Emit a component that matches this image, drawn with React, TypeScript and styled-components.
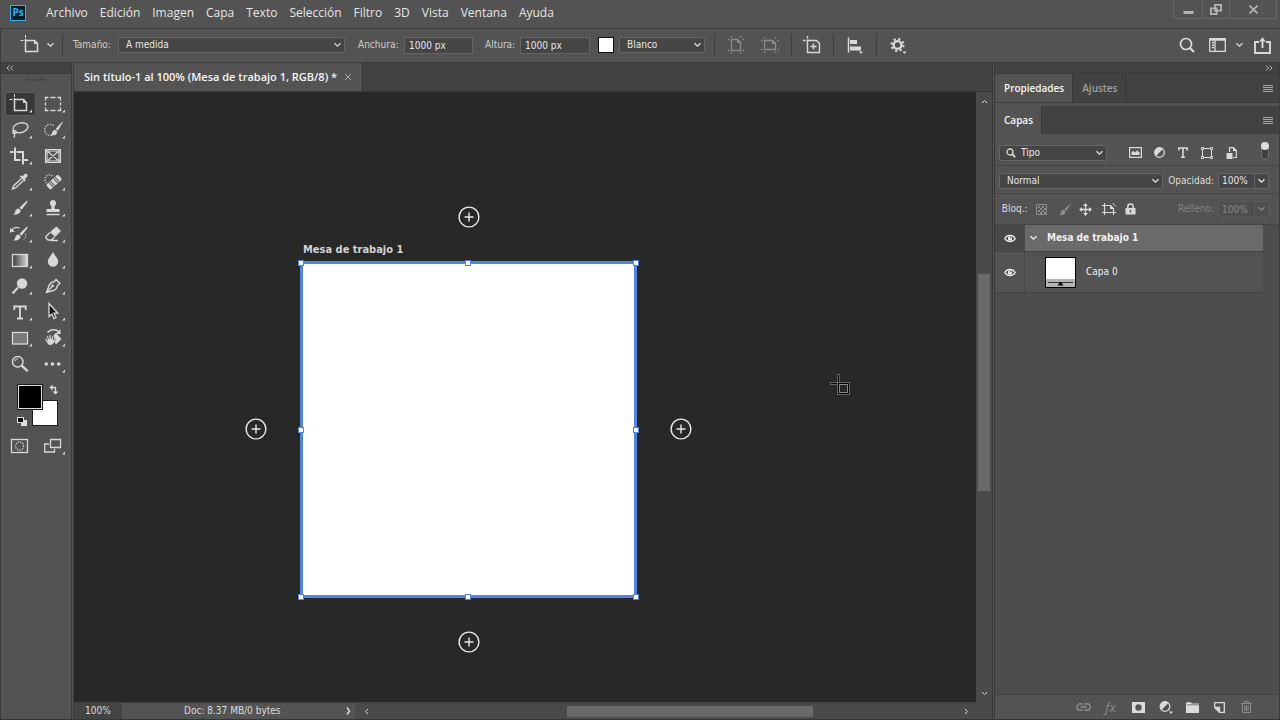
import React from "react";
import styled, { createGlobalStyle, css } from "styled-components";

const ui = `"DejaVu Sans Condensed", "DejaVu Sans", sans-serif`;
const sys = `"Open Sans", "Noto Sans", sans-serif`;

const GlobalStyle = createGlobalStyle`
  *, *::before, *::after { box-sizing: border-box; }
  body { margin: 0; background: #535353; color: #dcdcdc; font-family: ${ui}; font-size: 10px; line-height: 16px; }
  button, input, select { font: inherit; color: inherit; margin: 0; padding: 0; }
  button { background: none; border: 0; display: inline-flex; align-items: center; justify-content: center; }
  svg { display: block; flex: none; }
`;

const Shell = styled.div`
  display: flex;
  flex-direction: column;
  height: 100vh;
  border-bottom: 1px solid #263c38;
`;

/* ---------- menu bar ---------- */
const MenuBar = styled.header`
  display: flex;
  align-items: flex-start;
  justify-content: space-between;
  height: 29px;
  flex: none;
  padding-left: 10px;
  border-bottom: 1px solid #3c3c3c;
`;
const Menus = styled.nav`
  display: flex;
  align-items: center;
  height: 26px;
  gap: 12px;
  font-family: ${sys};
  font-size: 12px;
  color: #e6e6e6;
`;
const Logo = styled.span`
  width: 16px;
  height: 16px;
  margin-right: 8px;
  border: 1px solid #26b4e8;
  background: #061e30;
  color: #2cb6ea;
  font-family: ${sys};
  font-size: 10px;
  font-weight: 700;
  line-height: 13px;
  text-align: center;
`;
const WindowButtons = styled.div`
  display: flex;
  height: 19px;
  margin-right: 3px;
  border: 1px solid #686868;
  border-top: 0;
  border-radius: 0 0 3px 3px;
  color: #b4b4b4;
`;
const WindowButton = styled.button<{ $w: number }>`
  width: ${(p) => p.$w}px;
  & + & { border-left: 1px solid #686868; }
`;

/* ---------- options bar ---------- */
const OptionsBar = styled.div`
  display: flex;
  align-items: center;
  height: 34px;
  flex: none;
  padding: 0 1px 1px 5px;
  border-bottom: 1px solid #3c3c3c;
  border-left: 1px solid #3c3c3c;
`;
const Divider = styled.i<{ $l: number; $r: number }>`
  width: 1px;
  height: 22px;
  margin: 0 ${(p) => p.$r}px 0 ${(p) => p.$l}px;
  background: #3e3e3e;
`;
const Spacer = styled.span`flex: 1;`;
const FieldGroup = styled.label<{ $label: number; $after: number }>`
  display: flex;
  align-items: center;
  margin-right: ${(p) => p.$after}px;
  color: #cecece;
  > span:first-child { width: ${(p) => p.$label}px; white-space: nowrap; }
`;
const fieldBox = css`
  height: 16px;
  background: #454545;
  border: 1px solid #656565;
  border-radius: 2px;
  color: #e6e6e6;
  font-size: 10px;
  line-height: 14px;
  outline: 0;
`;
const TextInput = styled.input<{ $w: number }>`
  ${fieldBox}
  width: ${(p) => p.$w}px;
  height: 17px;
  border-radius: 0;
  padding: 0 0 0 4px;
`;
const SelectWrap = styled.span<{ $w?: number }>`
  display: inline-flex;
  align-items: center;
  position: relative;
  ${(p) => (p.$w ? `width: ${p.$w}px;` : "flex: 1;")}
  > svg { position: absolute; right: 3px; pointer-events: none; }
`;
const SelectBox = styled.select<{ $pad: number }>`
  ${fieldBox}
  appearance: none;
  width: 100%;
  padding: 0 16px 0 ${(p) => p.$pad}px;
`;
const SearchMark = styled.span`
  position: absolute;
  left: 7px;
  pointer-events: none;
`;
const Swatch = styled.button`
  width: 16px;
  height: 16px;
  background: #fff;
  border: 1px solid #111;
  margin-right: 5px;
`;
const IconButton = styled.button<{ $w?: number; $h?: number; $dim?: boolean }>`
  width: ${(p) => p.$w ?? 24}px;
  height: ${(p) => p.$h ?? 24}px;
  flex: none;
  color: ${(p) => (p.$dim ? "#8c8c8c" : "#dadada")};
`;

/* ---------- workspace ---------- */
const Workspace = styled.div`
  display: flex;
  flex: 1;
  min-height: 0;
  border-left: 1px solid #3c3c3c;
`;
const ToolPanel = styled.aside`
  width: 71px;
  flex: none;
  border-right: 1px solid #3c3c3c;
`;
const CollapseBar = styled.div<{ $end?: boolean }>`
  display: flex;
  flex: none;
  justify-content: ${(p) => (p.$end ? "flex-end" : "flex-start")};
  align-items: center;
  height: 11px;
  padding: 0 6px 0 5px;
  background: #424242;
  border-bottom: 1px solid #3a3a3a;
  color: #b6b6b6;
`;
const Grip = styled.div`
  height: 3px;
  width: 19px;
  margin: 4px auto 10px 25px;
  background: repeating-linear-gradient(90deg, #3f3f3f 0 1px, #575757 1px 2px);
`;
const ToolGrid = styled.div`
  display: grid;
  grid-template-columns: 33px 33px;
  grid-auto-rows: 26px;
  padding-left: 3px;
`;
const ToolButton = styled.button<{ $active?: boolean }>`
  place-self: center;
  width: 31px;
  height: 24px;
  padding-right: 1px;
  border-radius: 2px;
  color: #d8d8d8;
  ${(p) => p.$active && "background: #383838; box-shadow: 0 0 0 1px #5e5e5e inset;"}
`;
const ColorArea = styled.div`
  padding: 6px 0 0 15px;
  margin-bottom: 4px;
`;

const DocColumn = styled.main`
  display: flex;
  flex-direction: column;
  flex: 1;
  min-width: 0;
  margin-left: 1px;
  border-left: 1px solid #3c3c3c;
  border-right: 1px solid #383838;
`;
const DocTabs = styled.div`
  display: flex;
  flex: none;
  height: 29px;
  background: #424242;
  border-bottom: 1px solid #3a3a3a;
`;
const DocTab = styled.div`
  display: flex;
  align-items: center;
  gap: 7px;
  padding: 0 10px;
  background: #535353;
  border-right: 1px solid #383838;
  font-family: ${sys};
  font-size: 11px;
  font-weight: 600;
  color: #f6f6f6;
  white-space: nowrap;
`;
const CloseTab = styled.button`color: #a8a8a8;`;
const CanvasRow = styled.div`
  display: flex;
  flex: 1;
  min-height: 0;
`;
const Canvas = styled.div`
  position: relative;
  flex: 1;
  min-width: 0;
  overflow: hidden;
  background: #282828;
`;
const Pin = styled.div<{ $x: number; $y: number }>`
  position: absolute;
  left: ${(p) => p.$x}px;
  top: ${(p) => p.$y}px;
`;
const AddBoard = styled(Pin).attrs({ as: "button" })`
  width: 22px;
  height: 22px;
  color: #e8e8e8;
`;
const BoardName = styled(Pin)`
  font-size: 11px;
  font-weight: 700;
  color: #d2d2d2;
  white-space: nowrap;
`;
const Artboard = styled(Pin)`
  width: 337px;
  height: 337px;
  background: #fff;
  border: 3px solid #5585e0;
`;
const Handle = styled(Pin)`
  width: 6px;
  height: 6px;
  background: #fff;
  border: 1px solid #5585e0;
`;

const VScroll = styled.div`
  display: flex;
  flex-direction: column;
  align-items: center;
  width: 16px;
  flex: none;
  background: #4a4a4a;
  color: #b4b4b4;
`;
const VTrack = styled.div`
  flex: 1;
  display: flex;
  flex-direction: column;
  align-items: center;
  padding-top: 164px;
`;
const VThumb = styled.div`
  width: 12px;
  height: 217px;
  background: #6a6a6a;
`;
const StatusBar = styled.footer`
  display: flex;
  flex: none;
  align-items: center;
  height: 17px;
  background: #4a4a4a;
  border-top: 1px solid #404040;
  color: #dcdcdc;
`;
const Zoom = styled.input`
  width: 48px;
  height: 16px;
  border: 0;
  background: #444;
  padding: 0 0 0 11px;
  outline: 0;
`;
const DocInfo = styled.div`
  display: flex;
  align-items: center;
  justify-content: space-between;
  width: 233px;
  height: 16px;
  padding: 0 4px 0 62px;
  background: #535353;
`;
const HTrack = styled.div`
  flex: 1;
  display: flex;
  justify-content: center;
  padding-left: 63px;
`;
const HThumb = styled.div`
  width: 246px;
  height: 11px;
  background: #6a6a6a;
`;

/* ---------- right panels ---------- */
const Panels = styled.aside`
  display: flex;
  flex-direction: column;
  width: 286px;
  flex: none;
  margin-left: 1px;
  border-left: 1px solid #383838;
  border-right: 1px solid #3c3c3c;
`;
const PanelTabs = styled.div<{ $gap?: boolean }>`
  display: flex;
  flex: none;
  align-items: stretch;
  height: 28px;
  margin-bottom: ${(p) => (p.$gap ? 4 : 0)}px;
  background: #424242;
  font-family: ${sys};
  ${(p) => p.$gap && "box-shadow: 0 1px 0 #3a3a3a;"}
`;
const PanelTab = styled.button<{ $on?: boolean }>`
  padding: 0 8px 0 9px;
  border-right: 1px solid #383838;
  background: ${(p) => (p.$on ? "#535353" : "transparent")};
  color: ${(p) => (p.$on ? "#f6f6f6" : "#a0a0a0")};
  font-weight: 600;
`;
const PanelMenu = styled.button`
  margin-left: auto;
  padding-right: 6px;
  color: #a4a4a4;
`;
const Row = styled.div<{ $h: number; $top?: number }>`
  display: flex;
  flex: none;
  align-items: center;
  height: ${(p) => p.$h}px;
  padding: ${(p) => p.$top ?? 0}px 10px 0 4px;
  border-bottom: 1px solid #464646;
`;
const FilterIcons = styled.div`
  display: flex;
  margin-left: 16px;
`;
const ToggleSlot = styled.span`margin-left: auto;`;
const Percent = styled.label<{ $off?: boolean }>`
  display: flex;
  align-items: center;
  margin-left: auto;
  opacity: ${(p) => (p.$off ? 0.35 : 1)};
`;
const PercentInput = styled.input`
  ${fieldBox}
  width: 37px;
  margin-left: 4px;
  padding-left: 3px;
  border-radius: 2px 0 0 2px;
`;
const PercentDrop = styled.button`
  ${fieldBox}
  width: 15px;
  margin-left: -1px;
  border-radius: 0 2px 2px 0;
`;
const Layers = styled.ul`
  flex: 1;
  margin: 0;
  padding: 0 16px 0 0;
  background: #4d4d4d;
  list-style: none;
`;
const Layer = styled.li<{ $h: number; $on?: boolean }>`
  display: flex;
  height: ${(p) => p.$h}px;
  border-bottom: 1px solid #444;
  background: ${(p) => (p.$on ? "#6a6a6a" : "#535353")};
  font-weight: ${(p) => (p.$on ? 700 : 400)};
  color: #efefef;
`;
const Eye = styled.button<{ $on?: boolean }>`
  width: 30px;
  border-right: 1px solid #484848;
  background: ${(p) => (p.$on ? "#484848" : "#535353")};
`;
const LayerBody = styled.div<{ $pad: number; $gap: number }>`
  display: flex;
  align-items: center;
  gap: ${(p) => p.$gap}px;
  padding-left: ${(p) => p.$pad}px;
`;
const PanelFooter = styled.div`
  display: flex;
  flex: none;
  justify-content: flex-end;
  align-items: center;
  height: 25px;
  padding-right: 19px;
  border-top: 1px solid #444;
`;
const FxText = styled.em`
  font-family: ${sys};
  font-size: 13px;
`;

/* ---------- drawings ---------- */
type IcoProps = { w: number; h: number; sw?: number; children: React.ReactNode };
const Ico = ({ w, h, sw = 1, children }: IcoProps) => (
  <svg width={w} height={h} viewBox={`0 0 ${w} ${h}`} fill="none" stroke="currentColor" strokeWidth={sw} aria-hidden="true">
    {children}
  </svg>
);
const F = { fill: "currentColor", stroke: "none" };
const ChevronDown = () => (
  <Ico w={9} h={6} sw={1.3}><path d="M1.5 1.2l3 3 3-3" /></Ico>
);
const BurgerIcon = () => (
  <Ico w={10} h={9}><path d="M0 1.500h10M0 3.500h10M0 5.500h10M0 7.500h10" /></Ico>
);
const EyeIcon = () => (
  <Ico w={12} h={9} sw={1.3}>
    <path d="M.7 4.5C3.2.3 8.8.3 11.3 4.5 8.8 8.7 3.2 8.7.7 4.5z" />
    <circle cx="6" cy="4.5" r="2.2" {...F} />
    <circle cx="6.6" cy="3.8" r=".7" fill="#505050" stroke="none" />
  </Ico>
);
const Brush = () => (
  <>
    <path d="M22 4.5l-7.6 7.2 2.2 2.1L22.7 5.7z" {...F} />
    <path d="M13.6 12.4c-2.1-.1-3 1.3-3.300 3-.2 1.300-1 2.300-2.300 3.100 3.500.5 7-.6 7.800-3.800z" {...F} />
  </>
);
const ArtboardShape = () => (
  <>
    <path d="M9.5 2v3M4.500 7.500h3" />
    <path d="M9.5 6v12.500h12v-8l-3-3H9" strokeWidth="1.5" />
    <path d="M18 7l4 4h-4z" {...F} />
  </>
);

const tools: { name: string; active?: boolean; plain?: boolean; art: React.ReactNode }[] = [
  { name: "Mesa de trabajo", active: true, art: <ArtboardShape /> },
  { name: "Marco rectangular", art: <path d="M7.5 8.500v-3h3M12.500 5.500h5M19.500 5.500h3v3M22.500 10.500v3M22.500 15.500v3h-3M17.500 18.500h-5M10.500 18.500h-3v-3M7.500 13.500v-3" strokeWidth="1.3" /> },
  { name: "Lazo", art: (
    <>
      <ellipse cx="15.5" cy="9.8" rx="7.6" ry="4.8" transform="rotate(-14 15.5 9.8)" strokeWidth="1.4" />
      <path d="M8.5 12.500c-1.500 1-.8 3.200 1 3.200s2.800-1.500 1.500-2.600-2.800.1-1.800 2.400c.7 1.500.6 2.800-.4 4" strokeWidth="1.2" />
    </>
  ) },
  { name: "Selección rápida", art: (
    <>
      <path d="M15.5 7.500A5.500 5.500 0 1 0 14 17" strokeDasharray="1.3 1.3" strokeWidth="1.3" />
      <path d="M24.500 3.500l-7 7.500 2.300 1.800 5-8.500z" {...F} />
      <path d="M16.800 11.700c-2.200.4-2.500 2.700-3.800 5.800 3.500.3 6-.9 6.300-3.800z" {...F} />
    </>
  ) },
  { name: "Recortar", art: <><path d="M10 3.500V16h5.500M17.500 16H23" strokeWidth="2" /><path d="M5 8h3.500M11.500 8H18v12.500" strokeWidth="2" /></> },
  { name: "Marco", plain: true, art: <path d="M7.500 5.500h15v13h-15zM9 7h12v10H9zM8 6l14 12M22 6L8 18" strokeWidth="1.1" /> },
  { name: "Cuentagotas", art: (
    <>
      <path d="M16.500 8.500l-8 7.500-1 3 3-1 8-7.500" strokeWidth="1.4" />
      <path d="M14.800 6.200l1.200-1 1.300 1.200 2-2.100c2-1.700 4.300.6 2.700 2.600l-2.100 2.100 1 1.200-1.300 1.300z" {...F} />
    </>
  ) },
  { name: "Pincel corrector", art: (
    <>
      <path d="M14.500 6A4.600 4.600 0 1 0 8.500 13" strokeDasharray="1.3 1.3" strokeWidth="1.3" />
      <g transform="rotate(-42 16 12)">
        <rect x="8" y="8.800" width="16" height="6.600" rx="1.5" {...F} />
        <path d="M12 8.800v6.600M14 8.800v6.600M18 8.800v6.600M20 8.800v6.600" stroke="#535353" />
      </g>
    </>
  ) },
  { name: "Pincel", art: <Brush /> },
  { name: "Tampón", art: (
    <>
      <path d="M15 4a3.200 3.200 0 0 1 2 5.700c-.6.6-.5 2.300-.1 3.300h4.600v3h-13v-3h4.600c.4-1 .5-2.700-.1-3.300A3.200 3.200 0 0 1 15 4z" {...F} />
      <path d="M8.500 18.500h13" strokeWidth="1.5" />
    </>
  ) },
  { name: "Pincel de historia", art: (
    <>
      <Brush />
      <path d="M6.500 8.500c1.500-3 5-3.800 8-2.300" strokeWidth="1.3" /><path d="M5 6l5 3.500-5 1z" {...F} />
      <path d="M20.500 12c.8 2.500-.5 5-3 6" strokeDasharray="1.2 1.2" />
    </>
  ) },
  { name: "Borrador", art: (
    <>
      <path d="M18.500 5l4 4-5.500 5.500-4.500-4.500z" fill="currentColor" strokeLinejoin="round" />
      <path d="M12 10.500l-4 4c-.5.5-.5 1 0 1.500l2 2h3.500l3-3M13 18.500h7" strokeWidth="1.3" />
    </>
  ) },
  { name: "Degradado", art: (
    <>
      <defs><linearGradient id="tool-gradient"><stop offset="0" stopColor="#3a3a3a" /><stop offset="1" stopColor="#dadada" /></linearGradient></defs>
      <rect x="7.500" y="6.500" width="15" height="12" fill="url(#tool-gradient)" strokeWidth="1.3" />
    </>
  ) },
  { name: "Desenfocar", art: <path d="M15 4c1.500 3.500 5.200 6.200 5.200 9.500a5.200 5.200 0 0 1-10.400 0C9.800 10.200 13.500 7.500 15 4z" {...F} /> },
  { name: "Sobreexponer", art: <><circle cx="17" cy="9.5" r="5.2" {...F} /><path d="M13 13.500l-5.500 6" strokeWidth="2" /></> },
  { name: "Pluma", art: (
    <>
      <path d="M18 5.500l4 4-2.500 1.800c-.5 3.500-2.500 5.200-6 5.700l-5 1.500 1.800-5c.8-3.500 2.500-5.500 5.900-5.800z" strokeWidth="1.4" />
      <path d="M8.500 18.500l5-5.500" strokeWidth="1.2" /><circle cx="14.500" cy="12" r="1.4" {...F} />
    </>
  ) },
  { name: "Texto", art: <path d="M9.300 10V6.500h11.400V10M15 7v11M12 18.500h6" strokeWidth="1.8" /> },
  { name: "Selección de trazado", art: <path d="M11 3.500v13l3-2.500 2 4.500 2-1-2-4.300h3.800z" fill="#111" strokeWidth="1.3" /> },
  { name: "Rectángulo", art: <rect x="7.500" y="6.500" width="15" height="11.500" fill="#7a7a7a" strokeWidth="1.3" /> },
  { name: "Rotar vista", art: (
    <>
      <path d="M9.500 6.500c3-3.500 8.500-3.500 11.300-.8" strokeWidth="1.4" /><path d="M22.500 3v5h-4.800z" {...F} />
      <path d="M16 8.500l2-1.500 5.500 6-5.500 5.500-2-3z" {...F} />
      <path d="M10 18.500l-3-5c-.3-1 .8-1.300 1.500-.4l1.200 1.400-1-4.200c-.1-1 1.100-1.200 1.500-.2l1.100 3-.2-4c.1-.9 1.400-.9 1.600 0l.6 3.900.8-3.200c.3-.8 1.400-.6 1.400.3l-.3 4 1-1.400c.6-.7 1.600 0 1.200.8-1.200 2.400-1.500 5-3.900 5.600-1.300.3-2.500.2-3.500-.6z" fill="currentColor" stroke="#535353" strokeWidth=".5" />
    </>
  ) },
  { name: "Zoom", plain: true, art: <><circle cx="12.700" cy="9.700" r="5.3" strokeWidth="1.5" /><path d="M16.700 13.700l6 5.500" strokeWidth="2.4" /><path d="M9.800 9.500a3 3 0 0 1 3-2.800" /></> },
  { name: "Más herramientas", art: <><circle cx="8.300" cy="12" r="1.8" {...F} /><circle cx="14.500" cy="12" r="1.8" {...F} /><circle cx="20.700" cy="12" r="1.8" {...F} /></> },
];

const menus = ["Archivo", "Edición", "Imagen", "Capa", "Texto", "Selección", "Filtro", "3D", "Vista", "Ventana", "Ayuda"];
const addPoints = [[384, 114], [171, 326], [596, 326], [384, 539]];
const handles = [[224, 168], [391, 168], [559, 168], [224, 335], [559, 335], [224, 502], [391, 502], [559, 502]];

type SelProps = { label?: string; value: string; w?: number; pad: number; search?: boolean };
const Dropdown = ({ label, value, w, pad, search }: SelProps) => (
  <SelectWrap $w={w}>
    <SelectBox $pad={pad} aria-label={label}><option>{value}</option></SelectBox>
    {search && <SearchMark><Ico w={10} h={10} sw={1.3}><circle cx="4" cy="4" r="3" /><path d="M6.200 6.200l3 3" strokeWidth="1.8" /></Ico></SearchMark>}
    <ChevronDown />
  </SelectWrap>
);

const OrientationIcon = ({ wide }: { wide?: boolean }) => (
  <Ico w={18} h={18}>
    {wide ? (
      <>
        <path d="M3.500 4.500h8l3 3v6h-11z" strokeWidth="1.3" /><path d="M11 4l4 4h-4z" {...F} />
        <path d="M3.500 1v1.500M14.500 1v1.500M3.500 15.500V17M14.500 15.500V17M0 4.500h1.500M16.500 4.500H18M0 13.500h1.500M16.500 13.500H18" strokeWidth="1.3" />
      </>
    ) : (
      <>
        <path d="M4.500 3.500h6l3 3v8h-9z" strokeWidth="1.3" /><path d="M10 3l4 4h-4z" {...F} />
        <path d="M4.500 0v1.500M13.500 0v1.500M4.500 16.500V18M13.500 16.500V18M1 3.500h1.500M15.500 3.500H17M1 14.500h1.500M15.500 14.500H17" strokeWidth="1.3" />
      </>
    )}
  </Ico>
);

export default function App() {
  return (
    <Shell>
      <GlobalStyle />
      <MenuBar>
        <Menus>
          <Logo>Ps</Logo>
          {menus.map((m) => <button key={m}>{m}</button>)}
        </Menus>
        <WindowButtons>
          <WindowButton $w={28} aria-label="Minimizar"><Ico w={11} h={11}><path d="M.5 8.500h10" strokeWidth="3" /></Ico></WindowButton>
          <WindowButton $w={27} aria-label="Restaurar"><Ico w={12} h={11} sw={1.8}><path d="M4.900.9h6.200v5.700H4.900z" /><path d="M.9 4.400h5.700v5.700H.9z" /></Ico></WindowButton>
          <WindowButton $w={47} aria-label="Cerrar"><Ico w={9} h={9} sw={1.6}><path d="M.5.5l8 8M8.500.5l-8 8" /></Ico></WindowButton>
        </WindowButtons>
      </MenuBar>

      <OptionsBar>
        <IconButton $w={36} aria-label="Herramienta Mesa de trabajo">
          <Ico w={36} h={24}><g transform="translate(10 0)"><ArtboardShape /></g></Ico>
        </IconButton>
        <IconButton $w={17} aria-label="Ajustes preestablecidos"><ChevronDown /></IconButton>
        <Divider $l={3} $r={10} />
        <FieldGroup $label={45} $after={13}><span>Tamaño:</span><Dropdown value="A medida" w={227} pad={7} /></FieldGroup>
        <FieldGroup $label={46} $after={12}><span>Anchura:</span><TextInput $w={69} defaultValue="1000 px" /></FieldGroup>
        <FieldGroup $label={35} $after={8}><span>Altura:</span><TextInput $w={70} defaultValue="1000 px" /></FieldGroup>
        <Swatch aria-label="Color de fondo" />
        <Dropdown label="Fondo" value="Blanco" w={86} pad={7} />
        <Divider $l={9} $r={9} />
        <IconButton $dim aria-label="Vertical"><OrientationIcon /></IconButton>
        <IconButton $w={43} $dim aria-label="Horizontal"><OrientationIcon wide /></IconButton>
        <Divider $l={0} $r={8} />
        <IconButton aria-label="Añadir mesa de trabajo">
          <Ico w={18} h={18} sw={1.4}>
            <path d="M4.500 0v2.500M0 4.500h2.500" /><path d="M4.500 3.500v13h12V7.500l-3-3h-10M10.500 7.500v6M7.500 10.500h6" />
          </Ico>
        </IconButton>
        <Divider $l={9} $r={9} />
        <IconButton aria-label="Alinear">
          <Ico w={18} h={18}><path d="M2.500 1.500v15" strokeWidth="1.5" /><path d="M4 4h7v4H4zM4 10.500h11v4H4zM13 15.500h4l-2 2.500z" {...F} /></Ico>
        </IconButton>
        <Divider $l={9} $r={9} />
        <IconButton aria-label="Opciones">
          <Ico w={18} h={18}>
            <circle cx="8.500" cy="9" r="3.9" strokeWidth="2.4" />
            <circle cx="8.500" cy="9" r="6" strokeWidth="2" strokeDasharray="2.2 2.512" />
            <path d="M13.500 15.500h4l-2 2.500z" {...F} />
          </Ico>
        </IconButton>
        <Spacer />
        <IconButton $w={28} aria-label="Buscar"><Ico w={16} h={16} sw={1.7}><circle cx="7" cy="7" r="5.5" /><path d="M11 11l4 4" strokeWidth="2.2" /></Ico></IconButton>
        <IconButton $w={32} aria-label="Espacio de trabajo"><Ico w={17} h={14} sw={1.3}><path d="M.7.7h15.600v12.600H.7zM1 2h15M6 2.500V13" /><path d="M3 4.500h2M3 7h2M3 9.500h2" strokeWidth="1.5" /></Ico></IconButton>
        <IconButton $w={12} aria-label="Cambiar espacio de trabajo"><ChevronDown /></IconButton>
        <IconButton $w={34} aria-label="Compartir"><Ico w={17} h={17} sw={1.9}><path d="M5 5H1v11h15V5h-4M8.500 11V3" /><path d="M5.200 4.500L8.500.3l3.300 4.200z" {...F} /></Ico></IconButton>
      </OptionsBar>

      <Workspace>
        <ToolPanel>
          <CollapseBar><Ico w={8} h={6}><path d="M3.500.5L1 3l2.500 2.500M7 .5L4.500 3 7 5.500" /></Ico></CollapseBar>
          <Grip />
          <ToolGrid>
            {tools.map((t) => (
              <ToolButton key={t.name} $active={t.active} aria-label={t.name}>
                <Ico w={30} h={24}>
                  {t.art}
                  {!t.plain && <path d="M27 17.500v3h-3z" {...F} />}
                </Ico>
              </ToolButton>
            ))}
          </ToolGrid>
          <ColorArea>
            <Ico w={44} h={46}>
              <rect x="16.500" y="17.500" width="25" height="25" fill="#fff" stroke="#1c1c1c" />
              <rect x="1.500" y="1.500" width="25" height="25" fill="#000" stroke="#1c1c1c" />
              <rect x="2.500" y="2.500" width="23" height="23" fill="#000" stroke="#dcdcdc" />
              <path d="M35.500 4.500h4V9" strokeWidth="1.3" /><path d="M36.500 1.500v6l-3-3zM36.500 8.500h6L39.500 11.500z" {...F} />
              <rect x="5.500" y="37.500" width="5" height="5" fill="#ddd" stroke="#ddd" />
              <rect x="1.500" y="34.500" width="6" height="5" fill="#111" stroke="#ddd" />
            </Ico>
          </ColorArea>
          <ToolGrid>
            <ToolButton aria-label="Máscara rápida">
              <Ico w={30} h={24}><rect x="6.500" y="5.500" width="16" height="13" strokeWidth="1.3" /><circle cx="14.500" cy="12" r="4" strokeDasharray="1.2 1.2" strokeWidth="1.3" /></Ico>
            </ToolButton>
            <ToolButton aria-label="Modo de pantalla">
              <Ico w={30} h={24} sw={1.3}><path d="M12.500 5.500h10v8h-10z" /><path d="M11 10H6.700v8h9.800v-3" /><path d="M27 17.500v3h-3z" {...F} /></Ico>
            </ToolButton>
          </ToolGrid>
        </ToolPanel>

        <DocColumn>
          <DocTabs>
            <DocTab>
              Sin título-1 al 100% (Mesa de trabajo 1, RGB/8) *
              <CloseTab aria-label="Cerrar documento"><Ico w={8} h={8}><path d="M1 1l6 6M7 1L1 7" /></Ico></CloseTab>
            </DocTab>
          </DocTabs>
          <CanvasRow>
            <Canvas>
              <BoardName $x={229} $y={150}>Mesa de trabajo 1</BoardName>
              <Artboard $x={226} $y={169} />
              {handles.map(([x, y]) => <Handle key={`${x}-${y}`} $x={x} $y={y} />)}
              {addPoints.map(([x, y]) => (
                <AddBoard key={`${x}-${y}`} $x={x} $y={y} aria-label="Añadir mesa de trabajo">
                  <Ico w={22} h={22} sw={1.4}><circle cx="11" cy="11" r="9.9" /><path d="M11 6.500v9M6.500 11h9" /></Ico>
                </AddBoard>
              ))}
              <Pin $x={755} $y={281}>
                <Ico w={24} h={24}>
                  <path d="M9.500 1v8M1 10.500h8" stroke="#666" strokeWidth="3" />
                  <path d="M9.500 2v7M2 10.500h7" stroke="#000" />
                  <rect x="8.500" y="9.500" width="12" height="12" stroke="#666" />
                  <rect x="9.500" y="10.500" width="10" height="10" stroke="#000" />
                  <rect x="10.500" y="11.500" width="8" height="8" stroke="#8a8a8a" />
                </Ico>
              </Pin>
            </Canvas>
            <VScroll>
              <IconButton $w={16} $h={18} aria-label="Subir"><Ico w={7} h={5}><path d="M1 4l2.500-2.500L6 4" /></Ico></IconButton>
              <VTrack><VThumb /></VTrack>
              <IconButton $w={16} $h={18} aria-label="Bajar"><Ico w={7} h={5}><path d="M1 1l2.500 2.500L6 1" /></Ico></IconButton>
            </VScroll>
          </CanvasRow>
          <StatusBar>
            <Zoom aria-label="Nivel de zoom" defaultValue="100%" />
            <DocInfo>
              <span>Doc: 8.37 MB/0 bytes</span>
              <Ico w={5} h={8} sw={1.4}><path d="M1 .5L3.500 4 1 7.500" /></Ico>
            </DocInfo>
            <IconButton $w={22} $h={16} aria-label="Izquierda"><Ico w={5} h={7}><path d="M4 1L1.500 3.500 4 6" /></Ico></IconButton>
            <HTrack><HThumb /></HTrack>
            <IconButton $w={52} $h={16} aria-label="Derecha"><Ico w={5} h={7}><path d="M1 1l2.500 2.500L1 6" /></Ico></IconButton>
          </StatusBar>
        </DocColumn>

        <Panels>
          <CollapseBar $end><Ico w={8} h={6}><path d="M1 .5L3.500 3 1 5.500M4.500.5L7 3 4.500 5.500" /></Ico></CollapseBar>
          <PanelTabs $gap>
            <PanelTab $on>Propiedades</PanelTab>
            <PanelTab>Ajustes</PanelTab>
            <PanelMenu aria-label="Menú del panel Propiedades"><BurgerIcon /></PanelMenu>
          </PanelTabs>
          <PanelTabs>
            <PanelTab $on>Capas</PanelTab>
            <PanelMenu aria-label="Menú del panel Capas"><BurgerIcon /></PanelMenu>
          </PanelTabs>
          <Row $h={32} $top={6}>
            <Dropdown label="Filtro de capas" value="Tipo" w={108} pad={21} search />
            <FilterIcons>
              <IconButton aria-label="Píxeles"><Ico w={13} h={11} sw={1.2}><path d="M.6.6h11.800v9.800H.6z" /><path d="M2.500 8V5.500l1.800-1.800L6 5.500l2.300-2.300 2.200 2.500V8z" {...F} /></Ico></IconButton>
              <IconButton aria-label="Ajuste"><Ico w={11} h={11} sw={1.2}><circle cx="5.500" cy="5.500" r="4.8" /><path d="M2 8.900A4.800 4.800 0 0 1 8.900 2z" {...F} /></Ico></IconButton>
              <IconButton aria-label="Texto"><Ico w={10} h={11} sw={1.6}><path d="M.8 3.500V1h8.400v2.500M5 1v9M3 10.200h4" /></Ico></IconButton>
              <IconButton aria-label="Forma"><Ico w={12} h={12}><path d="M2.500 1.500h7M2.500 10.500h7M1.500 2.500v7M10.500 2.500v7" /><path d="M.5.5h2v2h-2zM9.500.5h2v2h-2zM.5 9.500h2v2h-2zM9.500 9.500h2v2h-2z" /></Ico></IconButton>
              <IconButton aria-label="Objeto inteligente"><Ico w={11} h={12} sw={1.2}><path d="M3.500 5V.6h4l2.800 2.800v7.100H7" /><path d="M7 0l4 4H7zM.5 6h6v6h-6z" {...F} /></Ico></IconButton>
            </FilterIcons>
            <ToggleSlot>
              <IconButton $w={8} $h={20} aria-label="Activar filtro">
                <Ico w={8} h={18}><rect x=".5" y=".5" width="7" height="17" rx="3.5" stroke="#707070" fill="#404040" /><circle cx="4" cy="4" r="4" {...F} /></Ico>
              </IconButton>
            </ToggleSlot>
          </Row>
          <Row $h={28} $top={2}>
            <Dropdown label="Modo de fusión" value="Normal" w={164} pad={7} />
            <Percent>Opacidad:<PercentInput defaultValue="100%" /><PercentDrop type="button" aria-label="Opacidad"><ChevronDown /></PercentDrop></Percent>
          </Row>
          <Row $h={31}>
            <span>&nbsp;Bloq.:</span>
            <IconButton $dim $w={28} aria-label="Bloquear píxeles transparentes"><Ico w={11} h={11}><path d="M.5.5h10v10H.5z" /><path d="M2 2h2v2H2zM6 2h2v2H6zM4 4h2v2H4zM8 4h2v2H8zM2 6h2v2H2zM6 6h2v2H6zM4 8h2v2H4zM8 8h2v2H8z" {...F} /></Ico></IconButton>
            <IconButton $dim $w={18} aria-label="Bloquear píxeles de imagen"><Ico w={14} h={14}><path d="M13.500.5L6.500 7.300l1.800 1.800z" {...F} /><path d="M5.800 7.800c-2 0-2.600 1.200-2.900 2.600-.3 1.300-1 2-2 2.700 3.200.4 6.300-.3 6.700-3.400z" {...F} /></Ico></IconButton>
            <IconButton $w={24} aria-label="Bloquear posición"><Ico w={13} h={13} sw={1.3}><path d="M6.500 2v9M2 6.500h9" /><path d="M6.500 0L9 3H4zM6.500 13L9 10H4zM0 6.500L3 4v5zM13 6.500L10 4v5z" {...F} /></Ico></IconButton>
            <IconButton $w={22} aria-label="Bloquear anidación"><Ico w={14} h={12} sw={1.2}><path d="M2.500 0v12M0 2.500h8.500l3 3V12M0 9.500h14M11.500 0v1.500M12.500 2.500H14" /><path d="M8 2l4 4H8z" {...F} /></Ico></IconButton>
            <IconButton $w={22} aria-label="Bloquear todo"><Ico w={11} h={12}><path d="M2.800 6V3.800a2.700 2.700 0 0 1 5.400 0V6" strokeWidth="1.5" /><path d="M.5 5h10v6.500H.5z" {...F} /><path d="M5.500 7v2.500" stroke="#535353" strokeWidth="1.5" /></Ico></IconButton>
            <Percent $off>Relleno:<PercentInput disabled defaultValue="100%" /><PercentDrop type="button" disabled aria-label="Relleno"><ChevronDown /></PercentDrop></Percent>
          </Row>
          <Layers>
            <Layer $h={27} $on>
              <Eye $on aria-label="Visibilidad de la mesa de trabajo"><EyeIcon /></Eye>
              <LayerBody $pad={4} $gap={9}><ChevronDown />Mesa de trabajo 1</LayerBody>
            </Layer>
            <Layer $h={41}>
              <Eye aria-label="Visibilidad de la capa"><EyeIcon /></Eye>
              <LayerBody $pad={20} $gap={10}>
                <Ico w={31} h={31}>
                  <rect x=".5" y=".5" width="30" height="30" fill="#fff" stroke="#000" />
                  <path d="M1 22h29v8H1z" fill="#b4b4b4" stroke="none" />
                  <path d="M3 25.500h25" stroke="#333" /><path d="M15.500 24.500l3 4h-6z" fill="#000" stroke="none" />
                </Ico>
                Capa 0
              </LayerBody>
            </Layer>
          </Layers>
          <PanelFooter>
            <IconButton $dim $w={27} aria-label="Enlazar capas"><Ico w={15} h={8} sw={1.4}><path d="M6.500 1.500A3 3 0 0 0 4 .8a3.200 3.200 0 0 0 0 6.400 3 3 0 0 0 2.500-.8M8.500 1.500A3 3 0 0 1 11 .8a3.200 3.200 0 0 1 0 6.400 3 3 0 0 1-2.500-.8M4.500 4h6" /></Ico></IconButton>
            <IconButton $dim $w={27} aria-label="Estilo de capa"><FxText>fx</FxText></IconButton>
            <IconButton $w={28} aria-label="Máscara de capa"><Ico w={13} h={11}><path d="M0 0h13v11H0zM6.500 2.300a3.200 3.200 0 1 0 0 6.400 3.200 3.200 0 1 0 0-6.400z" {...F} fillRule="evenodd" /></Ico></IconButton>
            <IconButton $w={27} aria-label="Capa de ajuste"><Ico w={14} h={14} sw={1.3}><circle cx="6" cy="6.500" r="4.8" /><path d="M2.500 9.900A4.800 4.800 0 0 1 9.400 3zM10 11.500h4l-2 2.500z" {...F} /></Ico></IconButton>
            <IconButton $w={27} aria-label="Grupo nuevo"><Ico w={13} h={11}><path d="M0 1.500C0 .7.4.2 1.200.2h3.600L6 1.500h7V11H0z" {...F} /><path d="M1 2.800h12" stroke="#535353" strokeWidth=".7" /></Ico></IconButton>
            <IconButton $w={27} aria-label="Capa nueva"><Ico w={11} h={11} sw={1.3}><path d="M.7 5V.7h9.600v9.600H5.500L.7 5.500h4.800v4.800" /><path d="M1 5.500h4.500V10z" {...F} /></Ico></IconButton>
            <IconButton $dim $w={27} aria-label="Eliminar capa"><Ico w={11} h={12}><path d="M0 2.500h11M3.500 2V.5h4V2M1.500 3v8.500h8V3M3.800 4.500V10M5.500 4.500V10M7.200 4.500V10" /></Ico></IconButton>
          </PanelFooter>
        </Panels>
      </Workspace>
    </Shell>
  );
}
